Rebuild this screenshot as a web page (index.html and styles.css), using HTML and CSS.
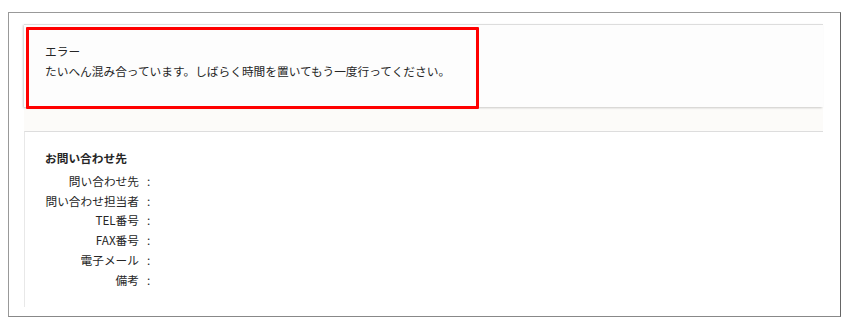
FILE: index.html
```
<!DOCTYPE html>
<html lang="ja">
  <head>
    <meta charset="UTF-8" />
    <title>エラー</title>
    <link rel="stylesheet" href="styles.css">
  </head>

  <body>
    <div class="frame">
      <div class="inner">
        <!-- Error message -->
        <div class="panel panel-error">
          <div class="line">エラー</div>
          <div class="line">たいへん混み合っています。しばらく時間を置いてもう一度行ってください。</div>
        </div>

        <!-- Contact info -->
        <div class="panel panel-contact">
          <div class="title">お問い合わせ先</div>
          <table class="contact">
            <tr><td class="label">問い合わせ先</td><td class="colon">:</td><td></td></tr>
            <tr><td class="label">問い合わせ担当者</td><td class="colon">:</td><td></td></tr>
            <tr><td class="label">TEL番号</td><td class="colon">:</td><td></td></tr>
            <tr><td class="label">FAX番号</td><td class="colon">:</td><td></td></tr>
            <tr><td class="label">電子メール</td><td class="colon">:</td><td></td></tr>
            <tr><td class="label">備考</td><td class="colon">:</td><td></td></tr>
          </table>
        </div>
      </div>

      <!-- highlight around the error -->
      <div class="highlight"></div>
    </div>
  </body>
</html>
```

FILE: styles.css
```
body {
  margin: 0;
  background-color: #ffffff;
  font-family: "Noto Sans CJK JP", "Noto Sans", sans-serif;
  font-size: 11.7px;
  color: #262626;
}

.frame {
  position: relative;
  box-sizing: border-box;
  width: 833px;
  height: 305px;
  margin: 12px 0 0 8px;
  border: 1px solid #999999;
  border-right-color: #666666;
  border-bottom-color: #888888;
  overflow: hidden;
}

.inner {
  width: 799px;
  margin: 11px 0 0 15px;
  background-color: #fcfbf9;
}

.panel {
  box-sizing: border-box;
  padding-left: 21px;
  border-top: 1px solid #dddddd;
}

.panel-error {
  height: 83px;
  padding-top: 16px;
  background-color: #fdfdfd;
  box-shadow: -1px 1px 2px rgba(0, 0, 0, 0.2);
}

.panel-contact {
  height: 176px;
  margin-top: 24px;
  padding-top: 16px;
  padding-left: 20px;
  background-color: #ffffff;
  border-left: 1px solid #e8e8e8;
}

.line {
  line-height: 20px;
}

.title {
  font-weight: bold;
  line-height: 20px;
  margin-bottom: 3px;
}

.contact {
  border-collapse: collapse;
}

.contact td {
  padding: 0;
  line-height: 19.7px;
}

.label {
  width: 94px;
  text-align: right;
  white-space: nowrap;
}

.colon {
  padding-left: 8px !important;
}

.highlight {
  position: absolute;
  left: 17px;
  top: 14px;
  box-sizing: border-box;
  width: 453px;
  height: 82px;
  border: 3.5px solid #ff0000;
  border-radius: 1px;
}
```
